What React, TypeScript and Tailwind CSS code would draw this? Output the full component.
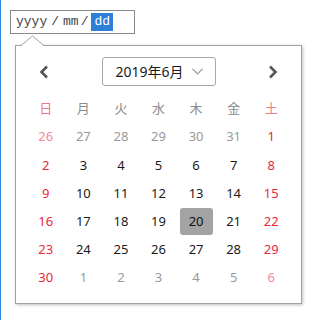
const weekdays = ["日", "月", "火", "水", "木", "金", "土"];

type Day = { n: number; out?: boolean };

const days: Day[] = [
  ...[26, 27, 28, 29, 30, 31].map((n) => ({ n, out: true })),
  ...Array.from({ length: 30 }, (_, i) => ({ n: i + 1 })),
  ...[1, 2, 3, 4, 5, 6].map((n) => ({ n, out: true })),
];

function dayColor(col: number, out?: boolean) {
  const weekend = col === 0 || col === 6;
  if (out) return weekend ? "text-[#f08c98]" : "text-[#9a9a9a]";
  return weekend ? "text-[#e8283c]" : "text-[#1a1a1a]";
}

export default function App() {
  return (
    <div
      className="h-[320px] w-[317px] overflow-hidden border-l border-[#2b86dc] bg-white pt-[10px]"
      style={{ fontFamily: '"Noto Sans", "Noto Sans CJK JP", sans-serif' }}
    >
      <div
        className="ml-[9px] flex h-[24px] w-[125px] items-center border border-[#8a8a8a] pl-[5px] text-[13px] text-[#444]"
        style={{ fontFamily: '"Liberation Mono", monospace' }}
      >
        <span>yyyy</span>
        <span className="ml-[4px]">/</span>
        <span className="ml-[4px]">mm</span>
        <span className="ml-[2px]">/</span>
        <span className="ml-[3px] bg-[#2f7fd8] px-[3px] leading-[18px] text-white">dd</span>
      </div>

      <div className="relative ml-[14px] mt-[11px] h-[259px] w-[287px] border border-[#a3a3a3] bg-white shadow-[1px_1px_3px_rgba(0,0,0,0.25)]">
        <svg className="absolute left-[5px] top-[-11px]" width="24" height="12" viewBox="0 0 24 12">
          <polygon points="0,11.5 11.5,1 23,11.5" fill="white" />
          <path d="M0 10.5 L11.5 1 L23 10.5" fill="none" stroke="#a3a3a3" strokeWidth="1" />
        </svg>

        <div className="flex items-center justify-between px-[16px] pt-[11px]">
          <button type="button" className="flex h-[29px] w-[24px] items-center justify-center">
            <svg width="10" height="14" viewBox="0 0 10 14">
              <path d="M8 1.5 L2.5 7 L8 12.5" fill="none" stroke="#555" strokeWidth="2.6" />
            </svg>
          </button>
          <div className="flex h-[29px] w-[114px] items-center justify-between rounded-[3px] border border-[#a8a8a8] pl-[13px] pr-[12px] text-[14px] text-[#1a1a1a]">
            <span>2019年6月</span>
            <svg width="11" height="7" viewBox="0 0 11 7">
              <path d="M0.5 0.8 L5.5 5.8 L10.5 0.8" fill="none" stroke="#9a9a9a" strokeWidth="1.2" />
            </svg>
          </div>
          <button type="button" className="flex h-[29px] w-[24px] items-center justify-center">
            <svg width="10" height="14" viewBox="0 0 10 14">
              <path d="M2 1.5 L7.5 7 L2 12.5" fill="none" stroke="#555" strokeWidth="2.6" />
            </svg>
          </button>
        </div>

        <div className="mt-[9px] grid grid-cols-7 px-[11px] text-[13px]">
          {weekdays.map((w, i) => (
            <div
              key={w}
              className={`flex h-[28px] items-center justify-center ${
                i === 0 || i === 6 ? "text-[#ec7c86]" : "text-[#8a8a8a]"
              }`}
            >
              {w}
            </div>
          ))}
          {days.map((d, i) => {
            const col = i % 7;
            const selected = !d.out && d.n === 20;
            return (
              <div key={i} className="flex h-[28.2px] items-center justify-center">
                <span
                  className={`flex h-[27px] w-[33px] items-center justify-center rounded-[3px] ${
                    selected ? "bg-[#a3a3a3] text-[#111]" : dayColor(col, d.out)
                  }`}
                >
                  {d.n}
                </span>
              </div>
            );
          })}
        </div>
      </div>
    </div>
  );
}
